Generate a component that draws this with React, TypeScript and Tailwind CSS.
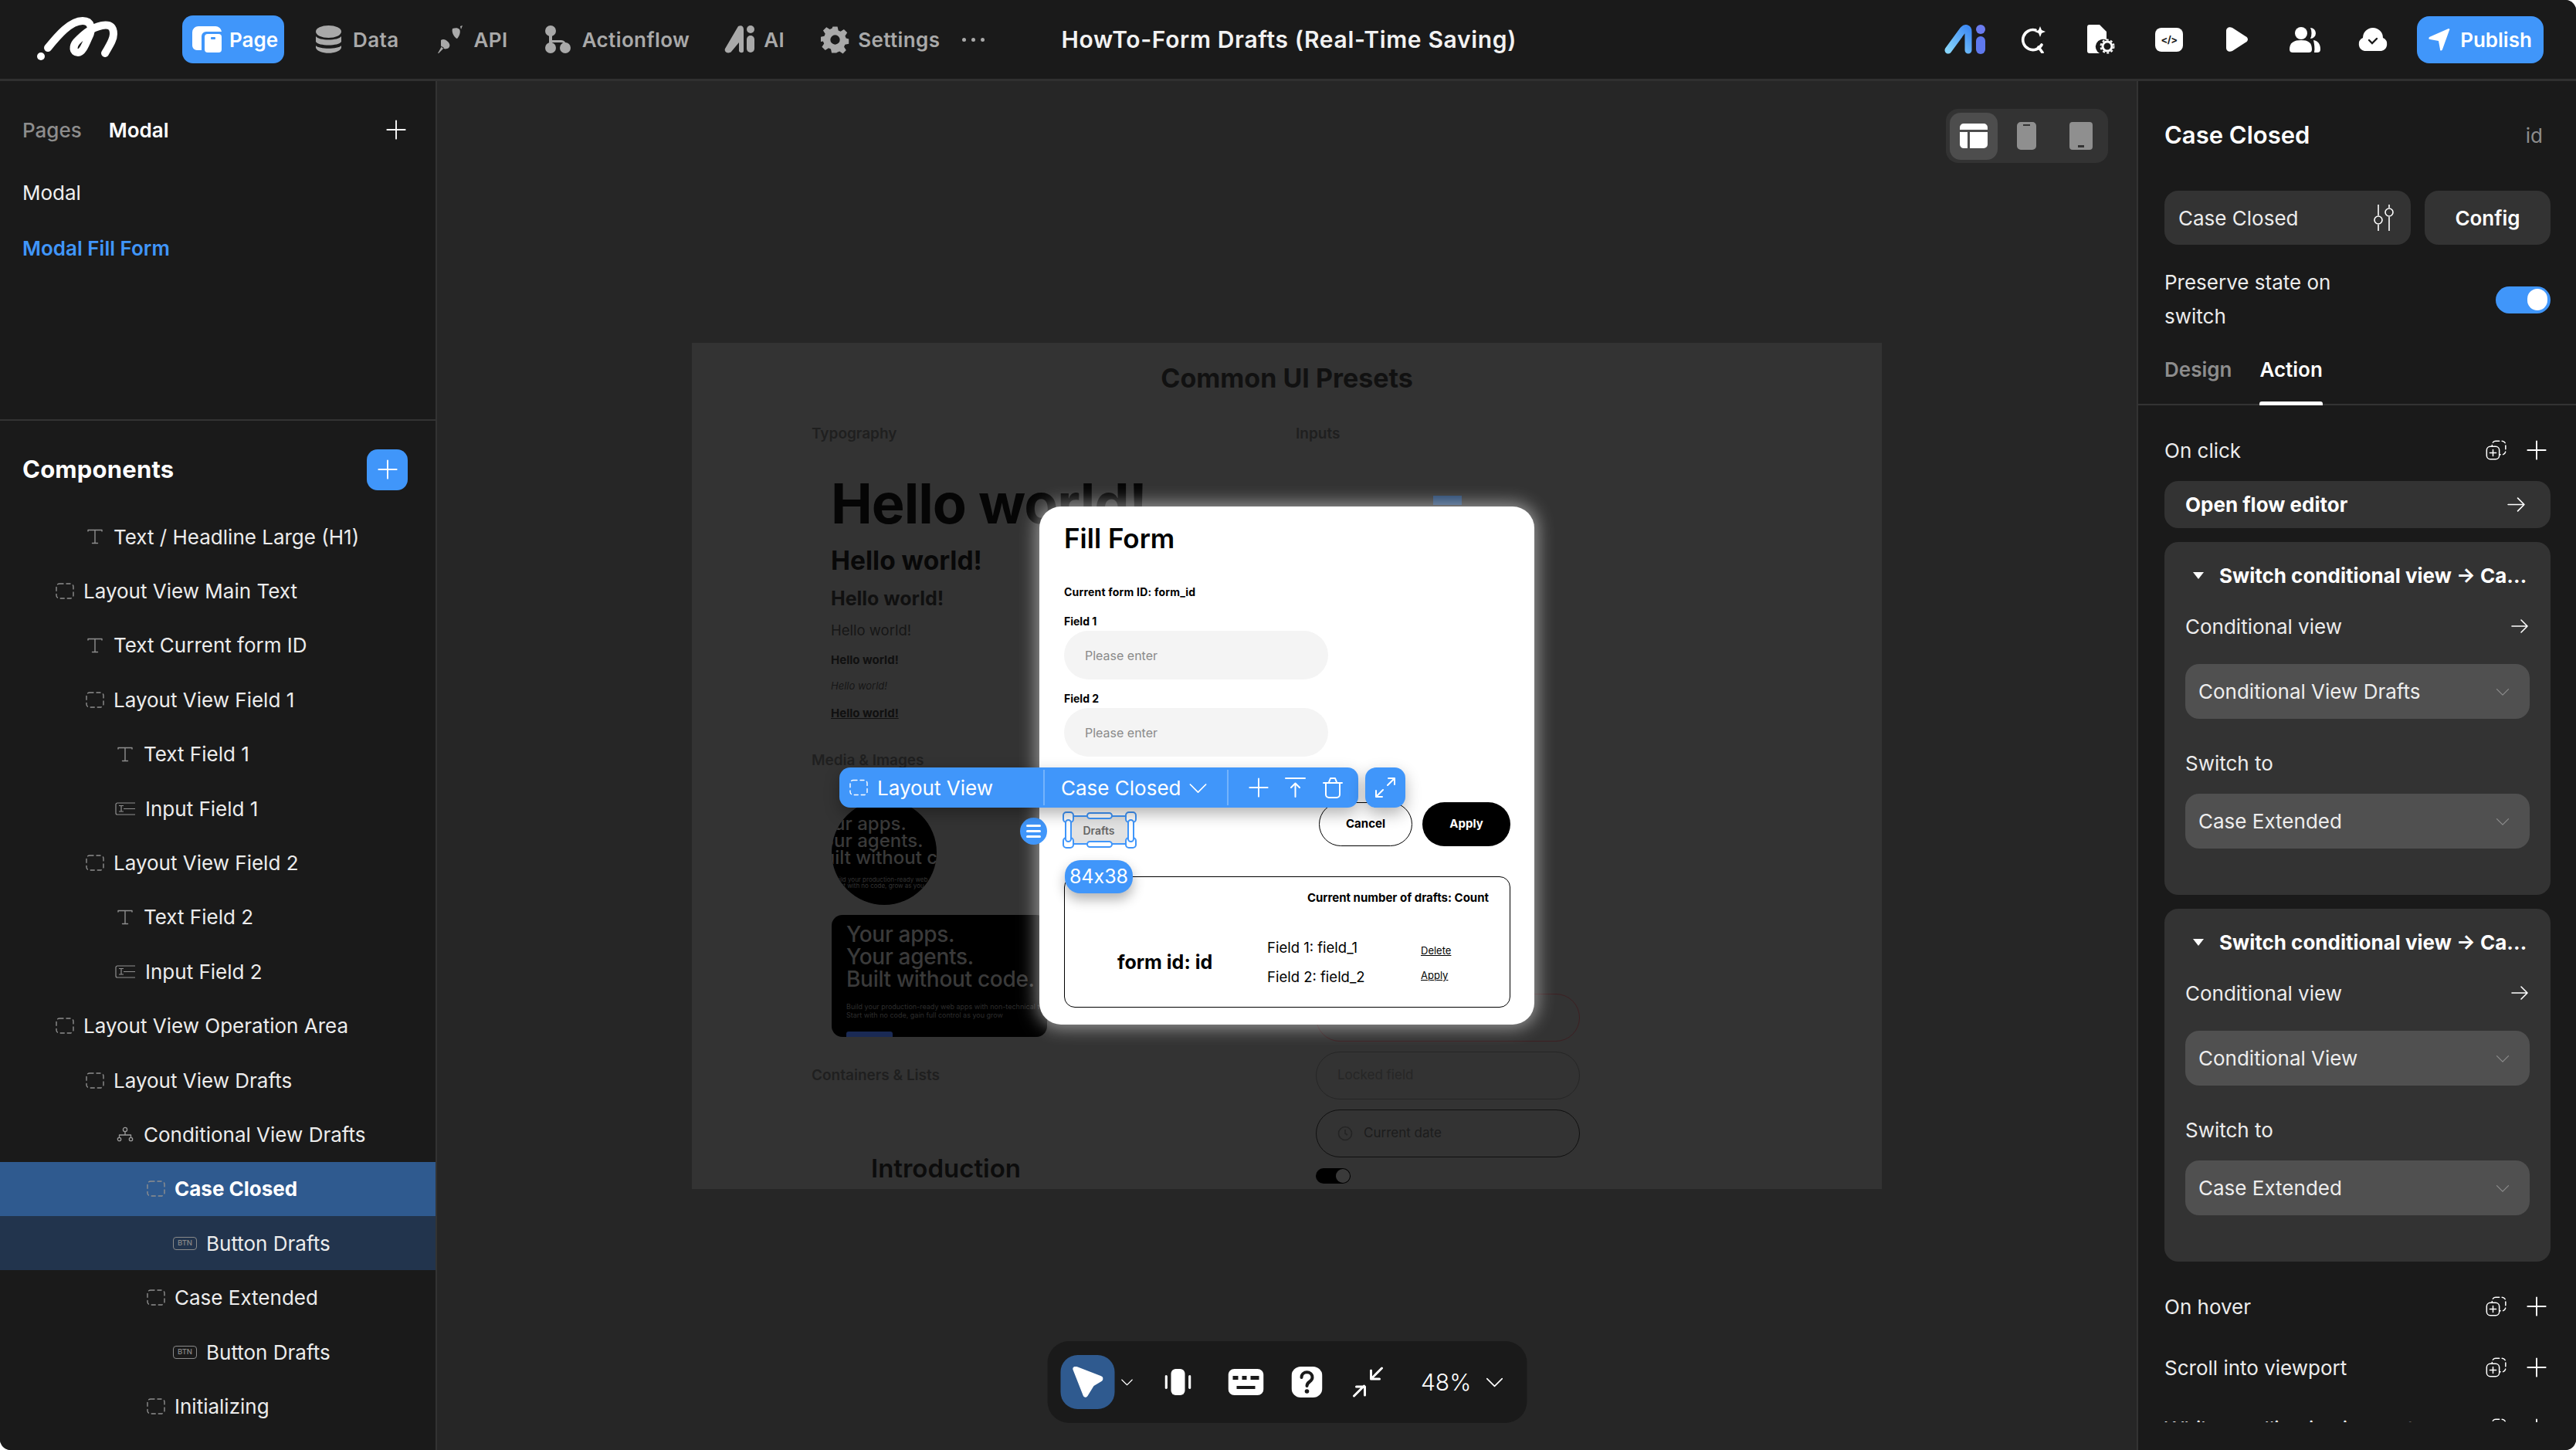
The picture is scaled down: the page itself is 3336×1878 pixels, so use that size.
import React from "react";

const C = ({ children, className = "", vb = "0 0 24 24", fill = "none", stroke = "currentColor", sw = 2 }: any) => (
  <svg viewBox={vb} fill={fill} stroke={stroke} strokeWidth={sw} strokeLinecap="round" strokeLinejoin="round" className={"shrink-0 " + className}>{children}</svg>
);

const Plus = ({ className = "" }: any) => <C className={className} sw={1.6}><path d="M12 2v20M2 12h20" /></C>;
const Chevron = ({ className = "" }: any) => <C className={className} sw={1.5}><path d="M3 8l9 9 9-9" /></C>;
const ArrowR = ({ className = "" }: any) => <C className={className} sw={1.6}><path d="M2 12h20M14 4l8 8-8 8" /></C>;
const Dashed = ({ className = "" }: any) => <C vb="0 0 24 21" className={className} sw={1.4}><rect x="1" y="1" width="22" height="19" rx="4" strokeDasharray="5 4" /></C>;
const TIcon = ({ className = "" }: any) => <C vb="0 0 20 20" className={className} sw={1.4}><path d="M1 3V1.5h18V3M10 1.5v17M6.5 18.5h7" /></C>;
const InputIcon = ({ className = "" }: any) => <C vb="0 0 27 17" className={className} sw={1.2}><path d="M26 1H3a2 2 0 0 0-2 2v11a2 2 0 0 0 2 2h23M5 4.5h6M5 12h6M8 4.5V12M11 8.5h15" strokeLinecap="butt" /></C>;
const Tree = ({ className = "" }: any) => <C vb="0 0 22 20" className={className} sw={1.3}><circle cx="11" cy="4" r="2.6" /><circle cx="3.5" cy="16.5" r="2.2" /><circle cx="18.5" cy="16.5" r="2.2" /><path d="M11 6.6V11M3.5 14.3V11h15v3.3" /></C>;
const Btn = () => <span className="w-[31px] h-[17px] shrink-0 rounded-[4px] border-[1.5px] border-[#8a8a8a] text-[#8a8a8a] text-[9.5px] leading-[14px] text-center font-medium">BTN</span>;
const AddCopy = ({ className = "" }: any) => (
  <C vb="0 0 24 24" className={className} sw={1.3}><rect x="8" y="2" width="15" height="15" rx="4" strokeDasharray="4 3" /><rect x="2" y="8" width="14" height="14" rx="4" fill="#1a1a1a" /><path d="M9 11.5v7M5.5 15h7" /></C>
);

const Logo = () => (
  <svg viewBox="0 0 106 58" className="w-[106px] h-[58px] shrink-0" fill="none" stroke="#fff" strokeLinecap="round" strokeLinejoin="round">
    <circle cx="6" cy="51" r="5" fill="#fff" stroke="none" />
    <path d="M15 40C28 24 44 5 60 5C72 5 73 16 68 26C64 35 60 46 54 46C47 46 47 38 52 32C60 24 70 14 85 11C97 9 100 14 100 22C100 30 94 38 89 47" strokeWidth="10" />
  </svg>
);

const NavItem = ({ icon, label, gap = "ml-[15px]", cls = "" }: any) => (
  <div className={"flex items-center text-[#a9a9a9] " + cls}>{icon}<span className={gap + " text-[26px] font-semibold tracking-[0.4px]"}>{label}</span></div>
);

const Slot = ({ children }: any) => <div className="w-[88px] flex items-center justify-center">{children}</div>;

const Header = () => (
  <header className="h-[105px] shrink-0 flex items-center border-b-[3px] border-[#303030] bg-[#1a1a1a] pl-[47px] pr-[42px] text-white">
    <Logo />
    <div className="ml-[83px] w-[132px] h-[62px] rounded-[14px] bg-[#4096fa] flex items-center pl-[13px] gap-[10px]">
      <svg viewBox="0 0 38 34" className="w-[38px] h-[34px]" fill="#fff"><path d="M0 8a8 8 0 0 1 8-8h22a8 8 0 0 1 8 7H18a6 6 0 0 0-6 6v18H6a6 6 0 0 1-6-6z" /><path d="M16 14a4 4 0 0 1 4-4h14a4 4 0 0 1 4 4v16a4 4 0 0 1-4 4H20a4 4 0 0 1-4-4z" /><rect x="24" y="14" width="6" height="3" rx="1" fill="#4096fa" /></svg>
      <span className="text-[26px] font-semibold">Page</span>
    </div>
    <NavItem cls="ml-[41px]" icon={<svg viewBox="0 0 33 36" className="w-[33px] h-[36px]" fill="#a9a9a9"><ellipse cx="16.5" cy="8" rx="16.5" ry="8" /><path d="M0 14c4 6 29 6 33 0v7c-3 6-30 6-33 0z" /><path d="M0 26c4 5 29 5 33 0v3c-3 9-30 9-33 0z" /></svg>} label="Data" />
    <NavItem cls="ml-[49px]" icon={<svg viewBox="0 0 33 36" className="w-[33px] h-[36px]" fill="#a9a9a9"><path d="M20 4c4-1 7-1 9 1 2 3 0 9-3 12-2 0-8-7-6-13zM30 1l3-1-2 5zM5 19c3-2 6-1 9 2 3 3 3 6 1 8-4 3-9 1-10-3zM6 27l-5 9 1 0 7-7z" /></svg>} label="API" />
    <NavItem cls="ml-[48px]" icon={<svg viewBox="0 0 33 36" className="w-[33px] h-[36px]" fill="#a9a9a9"><circle cx="7" cy="7" r="7" /><rect x="5" y="10" width="4" height="18" /><path d="M7 19h14a6 6 0 0 1 6 6v3h-3v-3a3 3 0 0 0-3-3H7z" /><circle cx="7" cy="29" r="7" /><circle cx="26" cy="29" r="7" /></svg>} label="Actionflow" />
    <NavItem cls="ml-[44px]" gap="ml-[10px]" icon={<svg viewBox="0 0 42 36" className="w-[42px] h-[36px]" fill="#a9a9a9"><path d="M19 1c4-2 7 0 7 4v28c0 3-5 3-6 0v-11l-10 12c-3 3-10 1-8-4z" /><circle cx="35" cy="5" r="5" /><rect x="30" y="13" width="10" height="22" rx="5" /></svg>} label="AI" />
    <NavItem cls="ml-[47px]" gap="ml-[11px]" icon={<svg viewBox="0 0 24 24" className="w-[37px] h-[37px]" fill="#a9a9a9"><path fillRule="evenodd" d="M10 1h4l.7 3.2 1.9.8 2.8-1.8 2.8 2.8-1.8 2.8.8 1.9L23.5 11.4v4l-3.2.7-.8 1.9 1.8 2.8-2.8 2.8-2.8-1.8-1.9.8L13.1 23h-4l-.7-3.2-1.9-.8-2.8 1.8-2.8-2.8 1.8-2.8-.8-1.9L-.3 13.6v-4l3.2-.7.8-1.9L1.9 4.2l2.8-2.8 2.8 1.8 1.9-.8zM12 8a4 4 0 1 0 0 8 4 4 0 0 0 0-8z" /></svg>} label="Settings" />
    <div className="ml-[29px] flex gap-[7px] w-[38px]"><i className="w-[5px] h-[5px] rounded-full bg-[#a9a9a9]" /><i className="w-[5px] h-[5px] rounded-full bg-[#a9a9a9]" /><i className="w-[5px] h-[5px] rounded-full bg-[#a9a9a9]" /></div>
    <h1 className="ml-[90px] text-[30px] font-semibold text-[#f2f2f2] tracking-[0.65px] whitespace-nowrap">HowTo-Form Drafts (Real-Time Saving)</h1>
    <div className="ml-auto flex items-center">
      <Slot><svg viewBox="0 0 54 38" className="w-[54px] h-[38px]" fill="none"><defs><linearGradient id="ai" x1="0" y1="1" x2="1" y2="0"><stop offset="0" stopColor="#86d4fb" /><stop offset="1" stopColor="#3f8cf5" /></linearGradient></defs><path d="M5 33L24 7c3-4 7-3 7 2v24" stroke="url(#ai)" strokeWidth="9" strokeLinecap="round" strokeLinejoin="round" /><circle cx="47" cy="6" r="6" fill="#6b7cf0" /><rect x="41" y="15" width="12" height="23" rx="6" fill="#5f79ee" /></svg></Slot>
      <Slot><svg viewBox="0 0 34 36" className="w-[34px] h-[36px]" fill="none" stroke="#fff" strokeWidth="3.6" strokeLinecap="round"><path d="M20 6a13 13 0 1 0 8 19M24 28l5 7" /><path d="M26 1l2 5 5 2-5 2-2 5-2-5-5-2 5-2z" fill="#fff" stroke="none" /></svg></Slot>
      <Slot><svg viewBox="0 0 36 38" className="w-[36px] h-[38px]" fill="#fff"><path d="M3 0h13l9 9v11a9 9 0 0 0-9 17H3a3 3 0 0 1-3-3V3a3 3 0 0 1 3-3z" /><circle cx="26" cy="28" r="6" fill="none" stroke="#fff" strokeWidth="3" /><circle cx="26" cy="28" r="8.5" fill="none" stroke="#fff" strokeWidth="2" strokeDasharray="3 2.5" /></svg></Slot>
      <Slot><div className="w-[36px] h-[31px] rounded-[8px] bg-white text-[#1a1a1a] flex items-center justify-center text-[13px] font-bold leading-none tracking-[-0.5px]">&lt;/&gt;</div></Slot>
      <Slot><svg viewBox="0 0 28 32" className="w-[28px] h-[32px]" fill="#fff"><path d="M0 5c0-4 4-6 8-4l17 11c4 2 4 6 0 8L8 31c-4 2-8 0-8-4z" /></svg></Slot>
      <Slot><svg viewBox="0 0 40 34" className="w-[40px] h-[34px]" fill="#fff"><circle cx="15" cy="9" r="8" /><path d="M0 30c0-9 6-12 15-12s14 3 14 12c0 3-2 4-4 4H4c-2 0-4-1-4-4z" /><path d="M27 2a7 7 0 0 1 0 14c2-4 2-10 0-14zM31 18c6 1 9 5 9 12 0 3-2 4-4 4h-4c1-6 0-11-1-16z" /></svg></Slot>
      <Slot><svg viewBox="0 0 40 32" className="w-[40px] h-[32px]"><path d="M9 31a9 9 0 0 1-2-17 13 13 0 0 1 26 0 9 9 0 0 1-2 17z" fill="#fff" /><path d="M15 17l4 4 6-6" stroke="#1a1a1a" strokeWidth="2.4" fill="none" strokeLinecap="round" /></svg></Slot>
      <div className="ml-[13px] w-[164px] h-[61px] rounded-[16px] bg-[#4096fa] flex items-center justify-center gap-[13px]">
        <svg viewBox="0 0 28 30" className="w-[28px] h-[30px]" fill="#fff"><path d="M1 12L26 1c1 0 2 1 1 2L18 28c-1 2-3 2-3 0l-2-11L2 15c-2 0-2-2-1-3z" /></svg>
        <span className="text-[26px] font-semibold">Publish</span>
      </div>
    </div>
  </header>
);

const tree: any[] = [
  [1, "t", "Text / Headline Large (H1)"],
  [0, "d", "Layout View Main Text"],
  [1, "t", "Text Current form ID"],
  [1, "d", "Layout View Field 1"],
  [2, "t", "Text Field 1"],
  [2, "i", "Input Field 1"],
  [1, "d", "Layout View Field 2"],
  [2, "t", "Text Field 2"],
  [2, "i", "Input Field 2"],
  [0, "d", "Layout View Operation Area"],
  [1, "d", "Layout View Drafts"],
  [2, "c", "Conditional View Drafts"],
  [3, "d", "Case Closed", "sel"],
  [4, "b", "Button Drafts", "child"],
  [3, "d", "Case Extended"],
  [4, "b", "Button Drafts"],
  [3, "d", "Initializing"],
];
const pads = ["pl-[72px]", "pl-[111px]", "pl-[150px]", "pl-[190px]", "pl-[224px]"];

const Row = ({ r }: any) => {
  const [lvl, ic, label, st] = r;
  const icon = ic === "t" ? <TIcon className="w-[20px] h-[20px] text-[#8f8f8f] mx-[2px]" />
    : ic === "d" ? <Dashed className="w-[24px] h-[21px] text-[#8f8f8f]" />
    : ic === "i" ? <InputIcon className="w-[27px] h-[17px] text-[#8f8f8f] -ml-[1px]" />
    : ic === "c" ? <Tree className="w-[22px] h-[20px] text-[#9a9a9a] mx-[1px]" />
    : <Btn />;
  const bg = st === "sel" ? "bg-[#2f5a8f]" : st === "child" ? "bg-[#22344d]" : "";
  return (
    <div className={"h-[70.4px] flex items-center gap-[12px] " + pads[lvl] + " " + bg}>
      {icon}
      <span className={"text-[26px] whitespace-nowrap " + (st === "sel" ? "font-bold text-white" : "text-[#ececec]")}>{label}</span>
    </div>
  );
};

const Left = () => (
  <aside className="w-[566px] shrink-0 border-r-2 border-[#333] bg-[#1a1a1a] flex flex-col">
    <div className="h-[440px] shrink-0 border-b-2 border-[#333] pl-[29px] pr-[37px]">
      <div className="h-[40px] mt-[43px] flex items-center text-[26px]">
        <span className="text-[#8d8d8d] font-medium">Pages</span>
        <span className="ml-[35px] font-semibold text-white">Modal</span>
        <Plus className="w-[28px] h-[28px] ml-auto text-white" />
      </div>
      <div className="mt-[41px] h-[40px] flex items-center text-[26px] text-[#f0f0f0]">Modal</div>
      <div className="mt-[32px] h-[40px] flex items-center text-[26px] font-semibold text-[#4096fa]">Modal Fill Form</div>
    </div>
    <div className="flex items-center h-[54px] mt-[36px] pl-[29px] pr-[36px]">
      <span className="text-[31px] font-bold text-white tracking-[0.2px]">Components</span>
      <span className="ml-auto w-[53px] h-[53px] rounded-[14px] bg-[#4096fa] flex items-center justify-center"><Plus className="w-[28px] h-[28px] text-white" /></span>
    </div>
    <div className="mt-[25px] flex-1 overflow-hidden">
      {tree.map((r, i) => <Row key={i} r={r} />)}
    </div>
  </aside>
);

const Heading = ({ children, cls = "" }: any) => <div className={"h-[32px] flex items-center text-[19px] font-semibold text-[#1f1f1f] whitespace-nowrap " + cls}>{children}</div>;
const Ghost = ({ text, mt, border, color = "text-[#242424]", extra }: any) => (
  <div className={"w-[342px] h-[62px] rounded-full border-[1.5px] flex items-center px-[27px] text-[17px] " + mt + " " + border + " " + color}>{extra}{text}</div>
);

const Artboard = () => (
  <div className="w-[1541px] h-[1096px] relative overflow-hidden bg-[#333333] shrink-0">
    <div className="h-[46px] mt-[23px] flex items-center justify-center text-[34px] font-bold text-[#111]">Common UI Presets</div>
    <div className="flex absolute left-0 top-[103px] w-full">
      <div className="w-[782px] shrink-0 pl-[155px]">
        <Heading>Typography</Heading>
        <div className="pl-[25px] text-[#080808] leading-none">
          <div className="h-[80px] mt-[33px] flex items-center text-[72px] font-bold tracking-[-1px] whitespace-nowrap text-[#050505]">Hello world!</div>
          <div className="h-[46px] mt-[12px] flex items-center text-[33.5px] font-bold">Hello world!</div>
          <div className="h-[36px] mt-[8px] flex items-center text-[25px] font-bold text-[#101010]">Hello world!</div>
          <div className="h-[28px] mt-[9px] flex items-center text-[18.5px] text-[#161616]">Hello world!</div>
          <div className="h-[24px] mt-[12px] flex items-center text-[15px] font-bold text-[#101010]">Hello world!</div>
          <div className="h-[22px] mt-[11px] flex items-center text-[13px] italic text-[#161616]">Hello world!</div>
          <div className="h-[24px] mt-[12px] flex items-center text-[15px] font-bold underline text-[#101010]">Hello world!</div>
        </div>
        <Heading cls="mt-[34px]">Media &amp; Images</Heading>
        <div className="pl-[26px]">
          <div className="mt-[34px] w-[136px] h-[136px] rounded-full bg-black overflow-hidden text-[#3a3a3a]">
            <div className="-ml-[26px] pt-[20px] text-[24px] leading-[22px] font-medium whitespace-nowrap">Your apps.<br />Your agents.<br />Built without code.</div>
            <div className="mt-[13px] text-[8px] leading-[8px] text-[#333] whitespace-nowrap">Build your production-ready web apps<br />Start with no code, grow as you go</div>
          </div>
          <div className="mt-[13px] w-[279px] h-[158px] rounded-[14px] bg-black overflow-hidden px-[19px] pt-[11px] text-[#3a3a3a]">
            <div className="text-[28px] leading-[29px] font-medium whitespace-nowrap tracking-[-0.3px]">Your apps.<br />Your agents.<br />Built without code.</div>
            <div className="mt-[15px] text-[9px] leading-[11px] text-[#2e2e2e] whitespace-nowrap">Build your production-ready web apps with non-technical teams<br />Start with no code, gain full control as you grow</div>
            <div className="mt-[16px] w-[60px] h-[16px] rounded-[3px] bg-[#1a2a55]" />
          </div>
        </div>
        <Heading cls="mt-[35px]">Containers &amp; Lists</Heading>
        <div className="mt-[79px] pl-[77px] h-[50px] flex items-center text-[33px] font-semibold text-[#0c0c0c]">Introduction</div>
      </div>
      <div className="flex-1">
        <Heading>Inputs</Heading>
        <div className="ml-[178px] mt-[63px] w-[37px] h-[12px] bg-[#2a4a72]" />
        <div className="ml-[26px] mt-[633px]">
          <Ghost mt="mt-0" border="border-[#3d1f22]" text="" />
          <Ghost mt="mt-[13px]" border="border-[#262626]" color="text-[#262626]" text="Locked field" />
          <Ghost mt="mt-[13px]" border="border-[#101010]" color="text-[#1c1c1c]" extra={<svg viewBox="0 0 20 20" className="w-[20px] h-[20px] mr-[14px] text-[#242424]" fill="none" stroke="currentColor" strokeWidth="1.6"><circle cx="10" cy="10" r="8.5" /><path d="M10 5v5l3 2" /></svg>} text="Current date" />
          <div className="mt-[14px] w-[45px] h-[20px] rounded-full bg-black flex justify-end items-center pr-[1px]"><i className="w-[18px] h-[18px] rounded-full bg-[#3a3a3a]" /></div>
        </div>
      </div>
    </div>
    <div className="absolute inset-0 flex items-center justify-center">
      <Modal />
    </div>
  </div>
);

const Selection = () => (
  <div className="absolute left-[30px] top-[395px] w-[96px] h-[48px]">
    <div className="absolute left-[3px] top-[5px] w-[88px] h-[38px] bg-[#e2e2e2] flex items-center justify-center text-[14px] font-semibold text-[#666]">Drafts</div>
    <div className="absolute inset-[5px] border-2 border-[#4096fa]" />
    {["left-0 top-0", "right-0 top-0", "left-0 bottom-0", "right-0 bottom-0"].map((p) => <i key={p} className={"absolute w-[15px] h-[15px] rounded-[5px] bg-white border-2 border-[#4096fa] " + p} />)}
    <i className="absolute left-[3px] top-[10px] w-[9px] h-[30px] rounded-full bg-white border-2 border-[#4096fa]" />
    <i className="absolute right-[3px] top-[10px] w-[9px] h-[30px] rounded-full bg-white border-2 border-[#4096fa]" />
    <i className="absolute left-[31px] top-[1px] w-[34px] h-[9px] rounded-full bg-white border-2 border-[#4096fa]" />
    <i className="absolute left-[31px] bottom-[1px] w-[34px] h-[9px] rounded-full bg-white border-2 border-[#4096fa]" />
  </div>
);

const Modal = () => (
  <div className="relative w-[641px] h-[671px] rounded-[28px] bg-white shadow-[0_0_22px_4px_rgba(255,255,255,0.5)] pl-[32px] pr-[31px] pt-[19px] text-black">
    <div className="h-[44px] flex items-center text-[35px] font-semibold">Fill Form</div>
    <div className="mt-[37px] h-[20px] flex items-center text-[14px] font-bold tracking-[0.2px]">Current form ID: form_id</div>
    <div className="mt-[18px] h-[20px] flex items-center text-[14px] font-bold">Field 1</div>
    <div className="mt-[3px] w-[342px] h-[63px] rounded-full bg-[#f4f4f4] flex items-center pl-[27px] text-[16px] text-[#8a8a8a]">Please enter</div>
    <div className="mt-[14px] h-[20px] flex items-center text-[14px] font-bold">Field 2</div>
    <div className="mt-[3px] w-[342px] h-[63px] rounded-full bg-[#f4f4f4] flex items-center pl-[27px] text-[16px] text-[#8a8a8a]">Please enter</div>
    <div className="mt-[59px] flex justify-end gap-[13px]">
      <div className="w-[121px] h-[57px] rounded-full border border-black flex items-center justify-center text-[15px] font-bold">Cancel</div>
      <div className="w-[114px] h-[57px] rounded-full bg-black text-white flex items-center justify-center text-[15px] font-bold">Apply</div>
    </div>
    <div className="mt-[39px] h-[170px] rounded-[14px] border-[1.5px] border-black relative">
      <div className="absolute right-[27px] top-[16px] text-[15px] font-bold whitespace-nowrap">Current number of drafts: Count</div>
      <div className="absolute left-[68px] top-[92px] text-[25px] font-bold whitespace-nowrap">form id: id</div>
      <div className="absolute left-[262px] top-[79px] text-[18.5px] leading-[24px] whitespace-nowrap">Field 1: field_1</div>
      <div className="absolute left-[262px] top-[117px] text-[18.5px] leading-[24px] whitespace-nowrap">Field 2: field_2</div>
      <div className="absolute left-[461px] top-[86px] text-[13px] underline leading-[18px]">Delete</div>
      <div className="absolute left-[461px] top-[118px] text-[13px] underline leading-[18px]">Apply</div>
    </div>

    <Selection />
    <div className="absolute left-[-25px] top-[403px] w-[35px] h-[35px] rounded-full bg-[#4096fa] flex flex-col items-center justify-center gap-[4px]"><i className="w-[19px] h-[3px] rounded-full bg-white" /><i className="w-[19px] h-[3px] rounded-full bg-white" /><i className="w-[19px] h-[3px] rounded-full bg-white" /></div>

    <div className="absolute left-[33px] top-[458px] w-[88px] h-[43px] rounded-[20px] bg-[#4096fa] text-white flex items-center justify-center text-[25px] [font-feature-settings:'calt'_0] shadow-[0_8px_16px_rgba(0,0,0,0.3)]">84x38</div>

    <div className="absolute left-[-259px] top-[338px] w-[672px] h-[52px] rounded-[14px] bg-[#4096fa] text-white flex items-center pl-[13px] text-[26px] shadow-[0_8px_20px_rgba(0,0,0,0.3)]">
      <Dashed className="w-[24px] h-[22px] text-white" />
      <span className="ml-[12px] w-[215px] whitespace-nowrap">Layout View</span>
      <i className="w-[2px] h-[46px] bg-[#74b3fb]" />
      <span className="ml-[21px] whitespace-nowrap">Case Closed</span>
      <Chevron className="w-[27px] h-[27px] ml-[9px]" />
      <i className="w-[2px] h-[46px] bg-[#74b3fb] ml-[24px]" />
      <Plus className="w-[28px] h-[28px] ml-[25px]" />
      <svg viewBox="0 0 27 28" className="w-[27px] h-[28px] ml-[20px]" fill="none" stroke="#fff" strokeWidth="2" strokeLinecap="round" strokeLinejoin="round"><path d="M1 2h25M13.5 26V9M8 14l5.5-5.5L19 14" /></svg>
      <svg viewBox="0 0 26 28" className="w-[26px] h-[28px] ml-[22px]" fill="none" stroke="#fff" strokeWidth="2" strokeLinecap="round" strokeLinejoin="round"><path d="M1 8h24M8 7l2-5h6l2 5M4 8v15a4 4 0 0 0 4 4h10a4 4 0 0 0 4-4V8" /></svg>
    </div>
    <div className="absolute left-[422px] top-[338px] w-[52px] h-[52px] rounded-[14px] bg-[#4096fa] flex items-center justify-center shadow-[0_8px_20px_rgba(0,0,0,0.3)]">
      <svg viewBox="0 0 28 28" className="w-[28px] h-[28px]" fill="none" stroke="#fff" strokeWidth="2" strokeLinecap="round" strokeLinejoin="round"><path d="M17 11L26 2M18 2h8v8M11 17l-9 9M2 18v8h8" /></svg>
    </div>
  </div>
);

const DockIcons = () => (
  <>
    <div className="w-[70px] h-[70px] rounded-[22px] bg-[#2f5a8f] flex items-center justify-center">
      <svg viewBox="0 0 40 40" className="w-[40px] h-[40px]" fill="#fff"><path d="M1 4C0 1 3-1 6 0l31 12c4 1.500 4 5 1 7l-10 6-8 13c-2 3-5 2-6-1z" /></svg>
    </div>
    <Chevron className="w-[18px] h-[18px] ml-[7px] text-white" />
    <svg viewBox="0 0 34 34" className="w-[34px] h-[34px] ml-[40px]" fill="#fff"><rect x="8" y="0" width="18" height="34" rx="6" /><rect x="0" y="8" width="3.4" height="18" rx="1.7" /><rect x="30.6" y="8" width="3.4" height="18" rx="1.7" /></svg>
    <svg viewBox="0 0 46 34" className="w-[46px] h-[34px] ml-[48px]" fill="#fff"><path fillRule="evenodd" d="M8 0h30a8 8 0 0 1 8 8v18a8 8 0 0 1-8 8H8a8 8 0 0 1-8-8V8a8 8 0 0 1 8-8zM11 22h24v4H11zM6 9h7v5H6zM18 9h6v5h-6zM29 9h11v5H29z" /></svg>
    <svg viewBox="0 0 40 40" className="w-[40px] h-[40px] ml-[36px]"><rect width="40" height="40" rx="12" fill="#fff" /><path d="M13 14c0-9 14-9 14 0 0 6-7 5-7 11" stroke="#1a1a1a" strokeWidth="4" fill="none" strokeLinecap="round" /><circle cx="20" cy="32" r="2.8" fill="#1a1a1a" /></svg>
    <svg viewBox="0 0 40 40" className="w-[40px] h-[40px] ml-[39px]" fill="none" stroke="#fff" strokeWidth="3" strokeLinecap="round" strokeLinejoin="round"><path d="M38 2L25 15M24 5v11h11M2 38l13-13M5 26h11v11" /></svg>
    <span className="ml-[49px] text-[30px] font-light text-white">48%</span>
    <Chevron className="w-[26px] h-[26px] ml-[17px] text-white" />
  </>
);

const Action = ({ label, sel, mt }: any) => (
  <div className={"flex items-center justify-between h-[40px] " + mt}>
    <span className="text-[26px] text-[#ececec] whitespace-nowrap">{label}</span>
    {sel}
  </div>
);
const ActionIcons = () => (
  <div className="flex items-center gap-[25px] pr-[4px] text-white">
    <AddCopy className="w-[28px] h-[28px]" />
    <Plus className="w-[28px] h-[28px]" />
  </div>
);
const Select = ({ text, mt }: any) => (
  <div className={"h-[71px] rounded-[18px] bg-[#505050] flex items-center justify-between pl-[17px] pr-[25px] text-[26px] text-[#ededed] " + mt}>
    <span>{text}</span>
    <Chevron className="w-[20px] h-[20px] text-[#8c8c8c]" />
  </div>
);
const SwitchCard = ({ view, mt }: any) => (
  <div className={"h-[457px] rounded-[18px] bg-[#333333] px-[27px] pt-[23px] " + mt}>
    <div className="h-[40px] flex items-center">
      <i className="ml-[10px] w-0 h-0 border-x-[7px] border-x-transparent border-t-[9px] border-t-white" />
      <span className="ml-[20px] text-[26px] font-bold text-white whitespace-nowrap overflow-hidden w-[404px] text-ellipsis">Switch conditional view → Case Extended</span>
    </div>
    <div className="mt-[26px] h-[40px] flex items-center justify-between">
      <span className="text-[26px] text-[#ececec]">Conditional view</span>
      <ArrowR className="w-[24px] h-[24px] text-white mr-[1px]" />
    </div>
    <Select text={view} mt="mt-[29px]" />
    <div className="mt-[37px] h-[40px] flex items-center text-[26px] text-[#ececec]">Switch to</div>
    <Select text="Case Extended" mt="mt-[20px]" />
  </div>
);

const Right = () => (
  <aside className="w-[569px] shrink-0 border-l-2 border-[#333] bg-[#1a1a1a] flex flex-col">
    <div className="px-[34px] pr-[33px] border-b-2 border-[#333] h-[420px] shrink-0">
      <div className="mt-[50px] h-[40px] flex items-center justify-between">
        <span className="text-[31px] font-semibold text-white">Case Closed</span>
        <span className="text-[26px] text-[#8d8d8d] pr-[10px]">id</span>
      </div>
      <div className="mt-[52px] flex gap-[18px]">
        <div className="w-[319px] h-[70px] rounded-[18px] bg-[#333] flex items-center justify-between pl-[18px] pr-[22px] text-[26px] text-[#ececec]">
          <span>Case Closed</span>
          <svg viewBox="0 0 26 34" className="w-[26px] h-[34px]" fill="none" stroke="#fff" strokeWidth="1.6"><path d="M6 0v14M6 26v8M20 0v4M20 16v18" /><circle cx="6" cy="20" r="5" /><circle cx="20" cy="10" r="5" /></svg>
        </div>
        <div className="w-[163px] h-[70px] rounded-[18px] bg-[#333] flex items-center justify-center text-[26px] font-semibold text-white">Config</div>
      </div>
      <div className="mt-[27px] flex items-center justify-between">
        <div className="text-[26px] leading-[44px] text-[#ececec] w-[300px]">Preserve state on switch</div>
        <div className="w-[71px] h-[35px] rounded-full bg-[#4096fa] flex items-center justify-end pr-[4px]"><i className="w-[26px] h-[28px] rounded-full bg-white" /></div>
      </div>
      <div className="mt-[24px] flex gap-[36px] text-[26px] font-semibold h-[69px]">
        <span className="text-[#8d8d8d] pt-[3px]">Design</span>
        <span className="relative text-white pt-[3px]">Action<i className="absolute left-0 right-0 bottom-0 h-[5px] rounded-t-[3px] bg-white" /></span>
      </div>
    </div>
    <div className="h-[1317px] overflow-hidden pl-[34px] pr-[33px]">
      <Action mt="mt-[38px]" label="On click" sel={<ActionIcons />} />
      <div className="mt-[20px] h-[61px] rounded-[18px] bg-[#333] flex items-center justify-between pl-[27px] pr-[32px] text-[26px] font-bold text-white">
        Open flow editor
        <ArrowR className="w-[25px] h-[25px]" />
      </div>
      <SwitchCard view="Conditional View Drafts" mt="mt-[18px]" />
      <SwitchCard view="Conditional View" mt="mt-[18px]" />
      <Action mt="mt-[38px]" label="On hover" sel={<ActionIcons />} />
      <Action mt="mt-[39px]" label="Scroll into viewport" sel={<ActionIcons />} />
      <Action mt="mt-[39px]" label="While scrolling in viewport" sel={<ActionIcons />} />
    </div>
  </aside>
);

export default function App() {
  return (
    <div className="w-[3336px] h-[1878px] flex flex-col overflow-hidden rounded-[14px] rounded-tl-none bg-[#1a1a1a] [font-family:Inter,'Liberation_Sans',sans-serif]">
      <Header />
      <div className="flex flex-1 min-h-0">
        <Left />
        <main className="flex-1 min-w-0 relative bg-[#262626] flex items-center justify-center overflow-hidden">
          <Artboard />
          <div className="absolute right-[37px] top-[36px] w-[210px] h-[70px] rounded-[16px] bg-[#333] flex items-center pl-[5px]">
            <div className="w-[62px] h-[61px] rounded-[14px] bg-[#4d4d4d] flex items-center justify-center">
              <svg viewBox="0 0 36 32" className="w-[36px] h-[32px]" fill="#fff"><path d="M5 0h26a5 5 0 0 1 5 5v3H0V5a5 5 0 0 1 5-5zM0 11h10v21H5a5 5 0 0 1-5-5zM13 11h23v16a5 5 0 0 1-5 5H13z" /></svg>
            </div>
            <svg viewBox="0 0 25 36" className="w-[25px] h-[36px] ml-[25px]" fill="#8f8f8f"><path fillRule="evenodd" d="M5 0h15a5 5 0 0 1 5 5v26a5 5 0 0 1-5 5H5a5 5 0 0 1-5-5V5a5 5 0 0 1 5-5zM8 3v2h9V3z" /></svg>
            <svg viewBox="0 0 30 36" className="w-[30px] h-[36px] ml-[43px]" fill="#8f8f8f"><path fillRule="evenodd" d="M4 0h22a4 4 0 0 1 4 4v28a4 4 0 0 1-4 4H4a4 4 0 0 1-4-4V4a4 4 0 0 1 4-4zM11 30v3h8v-3z" /></svg>
          </div>
          <div className="absolute bottom-[35px] left-1/2 -translate-x-1/2 w-[621px] h-[106px] rounded-[28px] bg-[#1a1a1a] flex items-center pl-[17px]">
            <DockIcons />
          </div>
        </main>
        <Right />
      </div>
    </div>
  );
}
